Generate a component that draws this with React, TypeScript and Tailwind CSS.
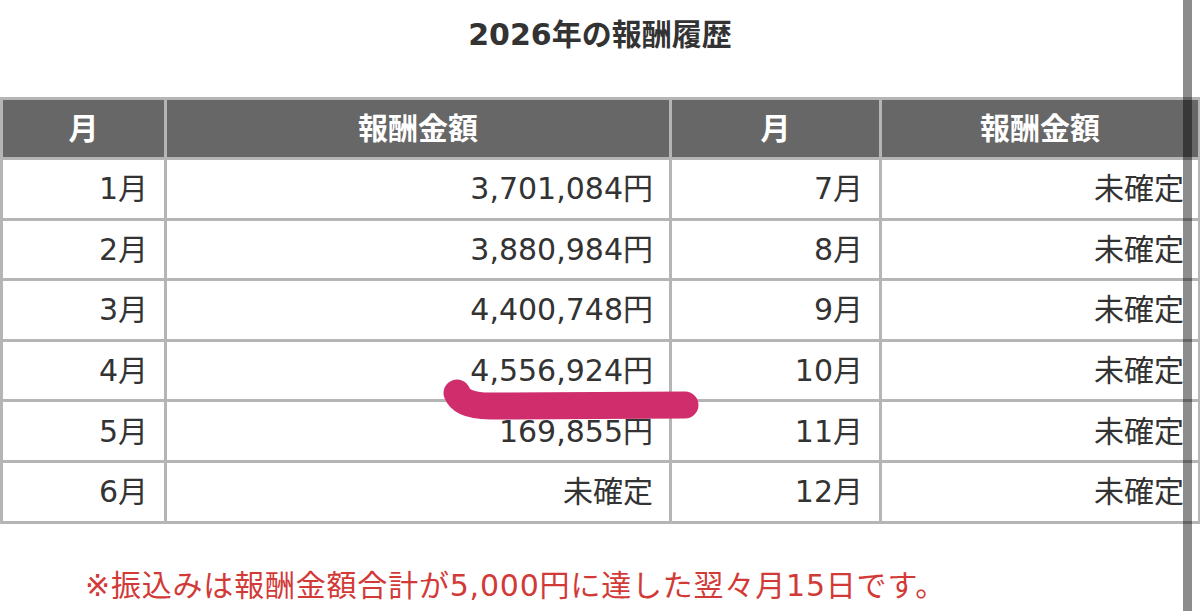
const rows: [string, string, string, string][] = [
  ["1月", "3,701,084円", "7月", "未確定"],
  ["2月", "3,880,984円", "8月", "未確定"],
  ["3月", "4,400,748円", "9月", "未確定"],
  ["4月", "4,556,924円", "10月", "未確定"],
  ["5月", "169,855円", "11月", "未確定"],
  ["6月", "未確定", "12月", "未確定"],
];

const font = "font-['DejaVu_Sans','Noto_Sans_CJK_JP',sans-serif]";

export default function App() {
  return (
    <div className={`relative min-h-[611px] w-[1200px] overflow-hidden bg-white text-[#333] ${font}`}>
      <h1 className="pt-[16px] text-center text-[30px] font-bold leading-[38px] text-[#333]">
        2026年の報酬履歴
      </h1>

      <table className="mt-[43px] w-[1198px] table-fixed border-collapse text-[30px]">
        <colgroup>
          <col className="w-[164px]" />
          <col className="w-[505px]" />
          <col className="w-[210px]" />
          <col className="w-[319px]" />
        </colgroup>
        <thead>
          <tr className="h-[60px] bg-[#676767] text-white">
            <th className="border-[3px] border-[#b5b5b5] font-bold">月</th>
            <th className="border-[3px] border-[#b5b5b5] font-bold">報酬金額</th>
            <th className="border-[3px] border-[#b5b5b5] font-bold">月</th>
            <th className="border-[3px] border-[#b5b5b5] font-bold">報酬金額</th>
          </tr>
        </thead>
        <tbody>
          {rows.map((r) => (
            <tr key={r[0]} className="h-[60.6px]">
              <td className="border-[3px] border-[#b5b5b5] pr-[16px] text-right">{r[0]}</td>
              <td className="border-[3px] border-[#b5b5b5] pr-[16px] text-right">{r[1]}</td>
              <td className="border-[3px] border-[#b5b5b5] pr-[16px] text-right">{r[2]}</td>
              <td className="border-[3px] border-[#b5b5b5] pr-[14px] text-right">{r[3]}</td>
            </tr>
          ))}
        </tbody>
      </table>

      <p className="mt-[42px] pl-[85px] text-[30px] leading-[40px] tracking-[0.8px] text-[#d23a38]">
        ※振込みは報酬金額合計が5,000円に達した翌々月15日です。
      </p>

      {/* hand-drawn marker under April */}
      <svg className="pointer-events-none absolute left-0 top-0" width="1200" height="611">
        <path
          d="M457 393 Q462 406 490 406 L685 405"
          fill="none"
          stroke="#cf2d6b"
          strokeWidth="27"
          strokeLinecap="round"
          strokeLinejoin="round"
        />
      </svg>

      {/* scrollbar overlay */}
      <div className="absolute right-[8px] top-0 h-full w-[9px] bg-black/45" />
    </div>
  );
}
